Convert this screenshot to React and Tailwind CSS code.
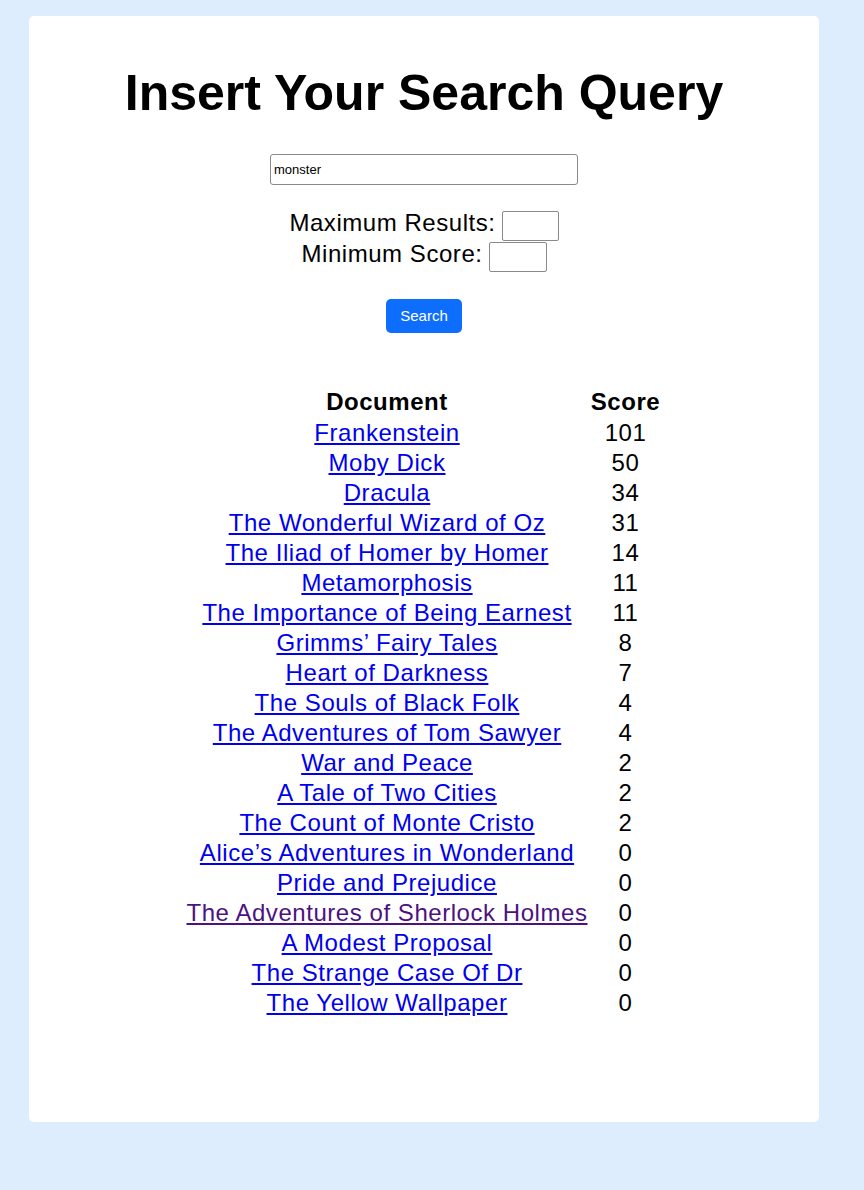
const results = [
    { title: 'Frankenstein', score: 101 },
    { title: 'Moby Dick', score: 50 },
    { title: 'Dracula', score: 34 },
    { title: 'The Wonderful Wizard of Oz', score: 31 },
    { title: 'The Iliad of Homer by Homer', score: 14 },
    { title: 'Metamorphosis', score: 11 },
    { title: 'The Importance of Being Earnest', score: 11 },
    { title: 'Grimms’ Fairy Tales', score: 8 },
    { title: 'Heart of Darkness', score: 7 },
    { title: 'The Souls of Black Folk', score: 4 },
    { title: 'The Adventures of Tom Sawyer', score: 4 },
    { title: 'War and Peace', score: 2 },
    { title: 'A Tale of Two Cities', score: 2 },
    { title: 'The Count of Monte Cristo', score: 2 },
    { title: 'Alice’s Adventures in Wonderland', score: 0 },
    { title: 'Pride and Prejudice', score: 0 },
    { title: 'The Adventures of Sherlock Holmes', score: 0, visited: true },
    { title: 'A Modest Proposal', score: 0 },
    { title: 'The Strange Case Of Dr', score: 0 },
    { title: 'The Yellow Wallpaper', score: 0 },
];

export default function App() {
    return (
        <div className="min-h-screen bg-[#deedfd] pt-4 pb-[68px] pl-[29px] font-['Liberation_Sans',Arial,sans-serif] text-black">
            <div className="w-[790px] bg-white rounded-[5px] flex flex-col items-center pt-[49px] pb-[104px]">

                <h1 className="text-[50px] leading-[56px] font-bold">Insert Your Search Query</h1>

                <input
                    type="text"
                    defaultValue="monster"
                    className="mt-[33px] w-[308px] h-[31px] border border-[#8a8a8a] rounded-[3px] px-[3px] text-[13px] outline-none"
                />

                {/* numeric filters */}
                <div className="mt-[23px] flex flex-col items-center text-[24px] tracking-[0.55px]">
                    <div className="h-[31px] flex items-start gap-[6px]">
                        <span className="leading-[27px] pt-[1px]">Maximum Results:</span>
                        <input type="text" className="mt-[3px] w-[57px] h-[30px] border border-[#8a8a8a] rounded-[2px] outline-none" />
                    </div>
                    <div className="h-[31px] flex items-start gap-[6px]">
                        <span className="leading-[27px] pt-[1px]">Minimum Score:</span>
                        <input type="text" className="mt-[3px] w-[58px] h-[30px] border border-[#8a8a8a] rounded-[2px] outline-none" />
                    </div>
                </div>

                <button className="mt-[29px] w-[76px] h-[34px] bg-[#0d6efd] text-white text-[15px] rounded-[5px]">Search</button>

                {/* results table */}
                <div className="mt-[52px] grid grid-cols-[403px_74px] text-[24px] tracking-[0.55px] text-center">
                    <div className="font-bold leading-[33px]">Document</div>
                    <div className="font-bold leading-[33px]">Score</div>
                    {results.map((r) => (
                        <div key={r.title} className="contents">
                            <div className="leading-[30px]">
                                <a href="#" className={r.visited ? 'text-[#4c1282] underline' : 'text-[#0000ee] underline'}>{r.title}</a>
                            </div>
                            <div className="leading-[30px]">{r.score}</div>
                        </div>
                    ))}
                </div>
            </div>
        </div>
    );
}
